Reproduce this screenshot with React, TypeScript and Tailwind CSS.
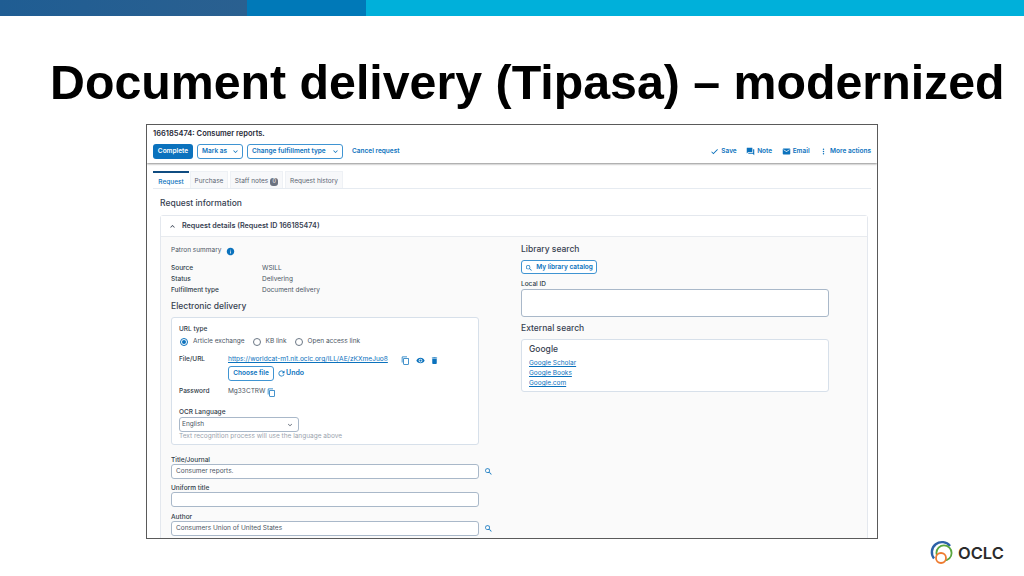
import React from 'react';
import {
  MdCheck,
  MdContentCopy,
  MdDelete,
  MdEmail,
  MdExpandLess,
  MdExpandMore,
  MdForum,
  MdInfo,
  MdMoreVert,
  MdRefresh,
  MdSearch,
  MdVisibility,
} from 'react-icons/md';

const BLUE = 'text-[#0b72bd]';

const ToolbarLink: React.FC<{ icon: React.ReactNode; label: string }> = ({ icon, label }) => (
  <span className={`flex items-center gap-[2px] text-[6.5px] font-semibold ${BLUE}`}>
    {icon}
    {label}
  </span>
);

const OutlineButton: React.FC<{ label: string; width: string }> = ({ label, width }) => (
  <span className={`flex h-[15px] ${width} items-center justify-between rounded-[3px] border border-[#3f94d2] bg-white pl-[4px] pr-[2px] text-[6.5px] font-semibold ${BLUE}`}>
    {label}
    <MdExpandMore className="text-[9px]" />
  </span>
);

const Radio: React.FC<{ label: string; checked?: boolean }> = ({ label, checked }) => (
  <span className="flex items-center gap-[5px]">
    <span className={`flex size-[8px] items-center justify-center rounded-full border ${checked ? 'border-[#0b72bd]' : 'border-[#6b7785]'} bg-white`}>
      {checked && <span className="size-[4px] rounded-full bg-[#0b72bd]" />}
    </span>
    {label}
  </span>
);

const SummaryRow: React.FC<{ label: string; value: string }> = ({ label, value }) => (
  <div className="flex h-[11px] items-center">
    <span className="w-[91px] font-medium text-[#2f3a48]">{label}</span>
    <span className="text-[#4b5563]">{value}</span>
  </div>
);

const TextField: React.FC<{ label: string; value?: string; searchable?: boolean; top: string }> = ({ label, value, searchable, top }) => (
  <div className={top}>
    <div className="h-[8px] font-medium leading-[8px] text-[#2f3a48]">{label}</div>
    <div className="flex items-center">
      <div className="flex h-[15px] w-[308px] items-center rounded-[3px] border border-[#a9b8c9] bg-white px-[4px] text-[#4b5563]">{value}</div>
      {searchable && <MdSearch className={`ml-[5px] text-[9px] ${BLUE}`} />}
    </div>
  </div>
);

const OclcLogo: React.FC = () => (
  <svg width="24" height="25" viewBox="0 0 24 25" fill="none">
    <path d="M4 18.5 A 10 10 0 1 1 20 6" stroke="#2d62a8" strokeWidth="2.4" />
    <circle cx="14" cy="13" r="7.6" stroke="#5aa63f" strokeWidth="1.8" />
    <circle cx="11" cy="18" r="5" stroke="#ee7b30" strokeWidth="1.8" fill="#fff" />
  </svg>
);

const App: React.FC = () => {
  return (
    <div className="flex h-[576px] w-[1024px] flex-col overflow-hidden bg-white font-['Inter',sans-serif]">
      <div className="flex h-[16px]">
        <div className="w-[247px] bg-gradient-to-r from-[#1f5d93] to-[#2a6090]" />
        <div className="w-[119px] bg-[#0079b8]" />
        <div className="flex-1 bg-[#00b0da]" />
      </div>

      <h1 className="mt-[36px] h-[60px] pl-[50px] font-['Liberation_Sans',Arial,sans-serif] text-[48.3px] font-bold leading-[60px] text-black">
        Document delivery (Tipasa) – modernized
      </h1>

      {/* screenshot of the app */}
      <div className="ml-[146px] mt-[12px] h-[415px] w-[732px] overflow-hidden border border-[#5a5a5a] bg-white text-[6.5px] text-[#2f3a48]">
        <div className="h-[38px] px-[6px] pt-[4px] shadow-[0_1px_2px_rgba(0,0,0,0.45)]">
          <div className="h-[9px] text-[7.5px] font-semibold leading-[9px] text-[#1f2937]">166185474: Consumer reports.</div>
          <div className="mt-[6px] flex items-center">
            <span className="flex h-[15px] w-[40px] items-center justify-center rounded-[3px] bg-[#0b72bd] font-semibold text-white">Complete</span>
            <div className="ml-[4px]"><OutlineButton label="Mark as" width="w-[46px]" /></div>
            <div className="ml-[4px]"><OutlineButton label="Change fulfillment type" width="w-[96px]" /></div>
            <span className={`ml-[9px] font-semibold ${BLUE}`}>Cancel request</span>
            <div className="ml-auto flex items-center gap-[9.5px]">
              <ToolbarLink icon={<MdCheck className="text-[9px]" />} label="Save" />
              <ToolbarLink icon={<MdForum className="text-[9px]" />} label="Note" />
              <ToolbarLink icon={<MdEmail className="text-[9px]" />} label="Email" />
              <ToolbarLink icon={<MdMoreVert className="text-[9px]" />} label="More actions" />
            </div>
          </div>
        </div>

        <div className="mt-[8px] px-[6px]">
          <div className="flex h-[18px] border-b border-[#e6ebf1]">
            <span className={`w-[36px] border-t-2 border-[#0f4c81] bg-white pt-[5px] text-center font-medium ${BLUE}`}>Request</span>
            <span className="ml-[1px] w-[38px] border border-b-0 border-[#eef1f5] bg-[#f7f8fa] pt-[5px] text-center text-[#5b6572]">Purchase</span>
            <span className="ml-[2px] flex w-[53px] items-center justify-center gap-[2px] border border-b-0 border-[#eef1f5] bg-[#f7f8fa] pt-[3px] text-[#5b6572]">
              <span>Staff notes</span>
              <span className="flex size-[8px] items-center justify-center rounded-[3px] bg-[#6b7280] text-[5.5px] text-white">0</span>
            </span>
            <span className="ml-[2px] w-[58px] border border-b-0 border-[#eef1f5] bg-[#f7f8fa] pt-[5px] text-center text-[#5b6572]">Request history</span>
          </div>

          <div className="mt-[8px] h-[12px] pl-[7px] text-[8.5px] font-medium leading-[12px] text-[#374151]">Request information</div>

          <div className="ml-[7px] mr-[3px] mt-[6px] h-[331px] rounded-t-[3px] border border-[#e4e8ee]">
            <div className="flex h-[21px] items-center border-b border-[#e8ebef] bg-white pl-[7px] text-[7.2px] font-semibold text-[#374151]">
              <MdExpandLess className="mr-[5px] text-[9px]" />
              Request details (Request ID 166185474)
            </div>

            <div className="flex h-[309px] bg-[#fafafa] pl-[10px]">
              <div className="w-[350px]">
                <div className="mt-[9px] flex h-[10px] items-center text-[#4b5563]">
                  Patron summary
                  <MdInfo className={`ml-[5px] text-[9px] ${BLUE}`} />
                </div>
                <div className="mt-[7px]">
                  <SummaryRow label="Source" value="WSILL" />
                  <SummaryRow label="Status" value="Delivering" />
                  <SummaryRow label="Fulfillment type" value="Document delivery" />
                </div>
                <div className="mt-[4px] h-[12px] text-[8.5px] font-medium leading-[12px] text-[#374151]">Electronic delivery</div>

                <div className="mt-[5px] h-[128px] w-[308px] rounded-[3px] border border-[#d7e0ea] bg-white pl-[7px] pt-[7px]">
                  <div className="h-[9px] font-medium leading-[9px]">URL type</div>
                  <div className="mt-[3px] flex h-[10px] items-center gap-[8px] pl-[1px] text-[#4b5563]">
                    <Radio label="Article exchange" checked />
                    <Radio label="KB link" />
                    <Radio label="Open access link" />
                  </div>
                  <div className="mt-[8px] flex h-[10px] items-center">
                    <span className="w-[49px] font-medium">File/URL</span>
                    <span className={`w-[160px] whitespace-nowrap text-[6.6px] underline ${BLUE}`}>https://worldcat-m1.nit.oclc.org/ILL/AE/zKXmeJuo8</span>
                    <span className={`ml-[13px] flex gap-[5.5px] text-[9px] ${BLUE}`}>
                      <MdContentCopy />
                      <MdVisibility />
                      <MdDelete />
                    </span>
                  </div>
                  <div className="ml-[49px] mt-[1px] flex items-center">
                    <span className={`flex h-[15px] w-[46px] items-center justify-center rounded-[3px] border border-[#3f94d2] font-semibold ${BLUE}`}>Choose file</span>
                    <span className={`ml-[3px] flex items-center text-[7px] font-semibold ${BLUE}`}>
                      <MdRefresh className="text-[9px]" />
                      Undo
                    </span>
                  </div>
                  <div className="mt-[6px] flex h-[10px] items-center">
                    <span className="w-[49px] font-medium">Password</span>
                    <span className="text-[#4b5563]">Mg33CTRW</span>
                    <MdContentCopy className={`ml-[2px] text-[9px] ${BLUE}`} />
                  </div>
                  <div className="mt-[11px] h-[9px] font-medium leading-[9px]">OCR Language</div>
                  <div className="flex h-[15px] w-[120px] items-center justify-between rounded-[3px] border border-[#a9b8c9] bg-white pl-[2px] pr-[4px] text-[#4b5563]">
                    English
                    <MdExpandMore className="text-[8px]" />
                  </div>
                  <div className="text-[#9aa3ae]">Text recognition process will use the language above</div>
                </div>

                <TextField top="mt-[11px]" label="Title/Journal" value="Consumer reports." searchable />
                <TextField top="mt-[5px]" label="Uniform title" />
                <TextField top="mt-[6px]" label="Author" value="Consumers Union of United States" searchable />
              </div>

              <div>
                <div className="mt-[6px] h-[12px] text-[8.5px] font-medium leading-[12px] text-[#374151]">Library search</div>
                <span className={`mt-[5px] flex h-[14px] w-[76px] items-center justify-center gap-[3px] rounded-[3px] border border-[#3f94d2] bg-white pt-[1px] font-semibold ${BLUE}`}>
                  <MdSearch className="text-[8px]" />
                  My library catalog
                </span>
                <div className="mt-[6px] h-[9px] font-medium leading-[9px]">Local ID</div>
                <div className="h-[28px] w-[308px] rounded-[3px] border border-[#a9b8c9] bg-white" />
                <div className="mt-[5px] h-[12px] text-[8.5px] font-medium leading-[12px] text-[#374151]">External search</div>
                <div className="mt-[5px] h-[53px] w-[308px] rounded-[3px] border border-[#d7e0ea] bg-white pl-[7px] pt-[3px]">
                  <div className="h-[12px] text-[8.5px] font-medium leading-[12px] text-[#374151]">Google</div>
                  <div className={`mt-[3px] flex flex-col underline ${BLUE} leading-[10px]`}>
                    <span>Google Scholar</span>
                    <span>Google Books</span>
                    <span>Google.com</span>
                  </div>
                </div>
              </div>
            </div>
          </div>
        </div>
      </div>

      <div className="mt-[1px] flex items-center pl-[930px]">
        <OclcLogo />
        <span className="ml-[4px] font-['Inter',sans-serif] text-[16.5px] font-semibold leading-[24px] text-[#2b2b2b]">OCLC</span>
      </div>
    </div>
  );
};

export default App;
